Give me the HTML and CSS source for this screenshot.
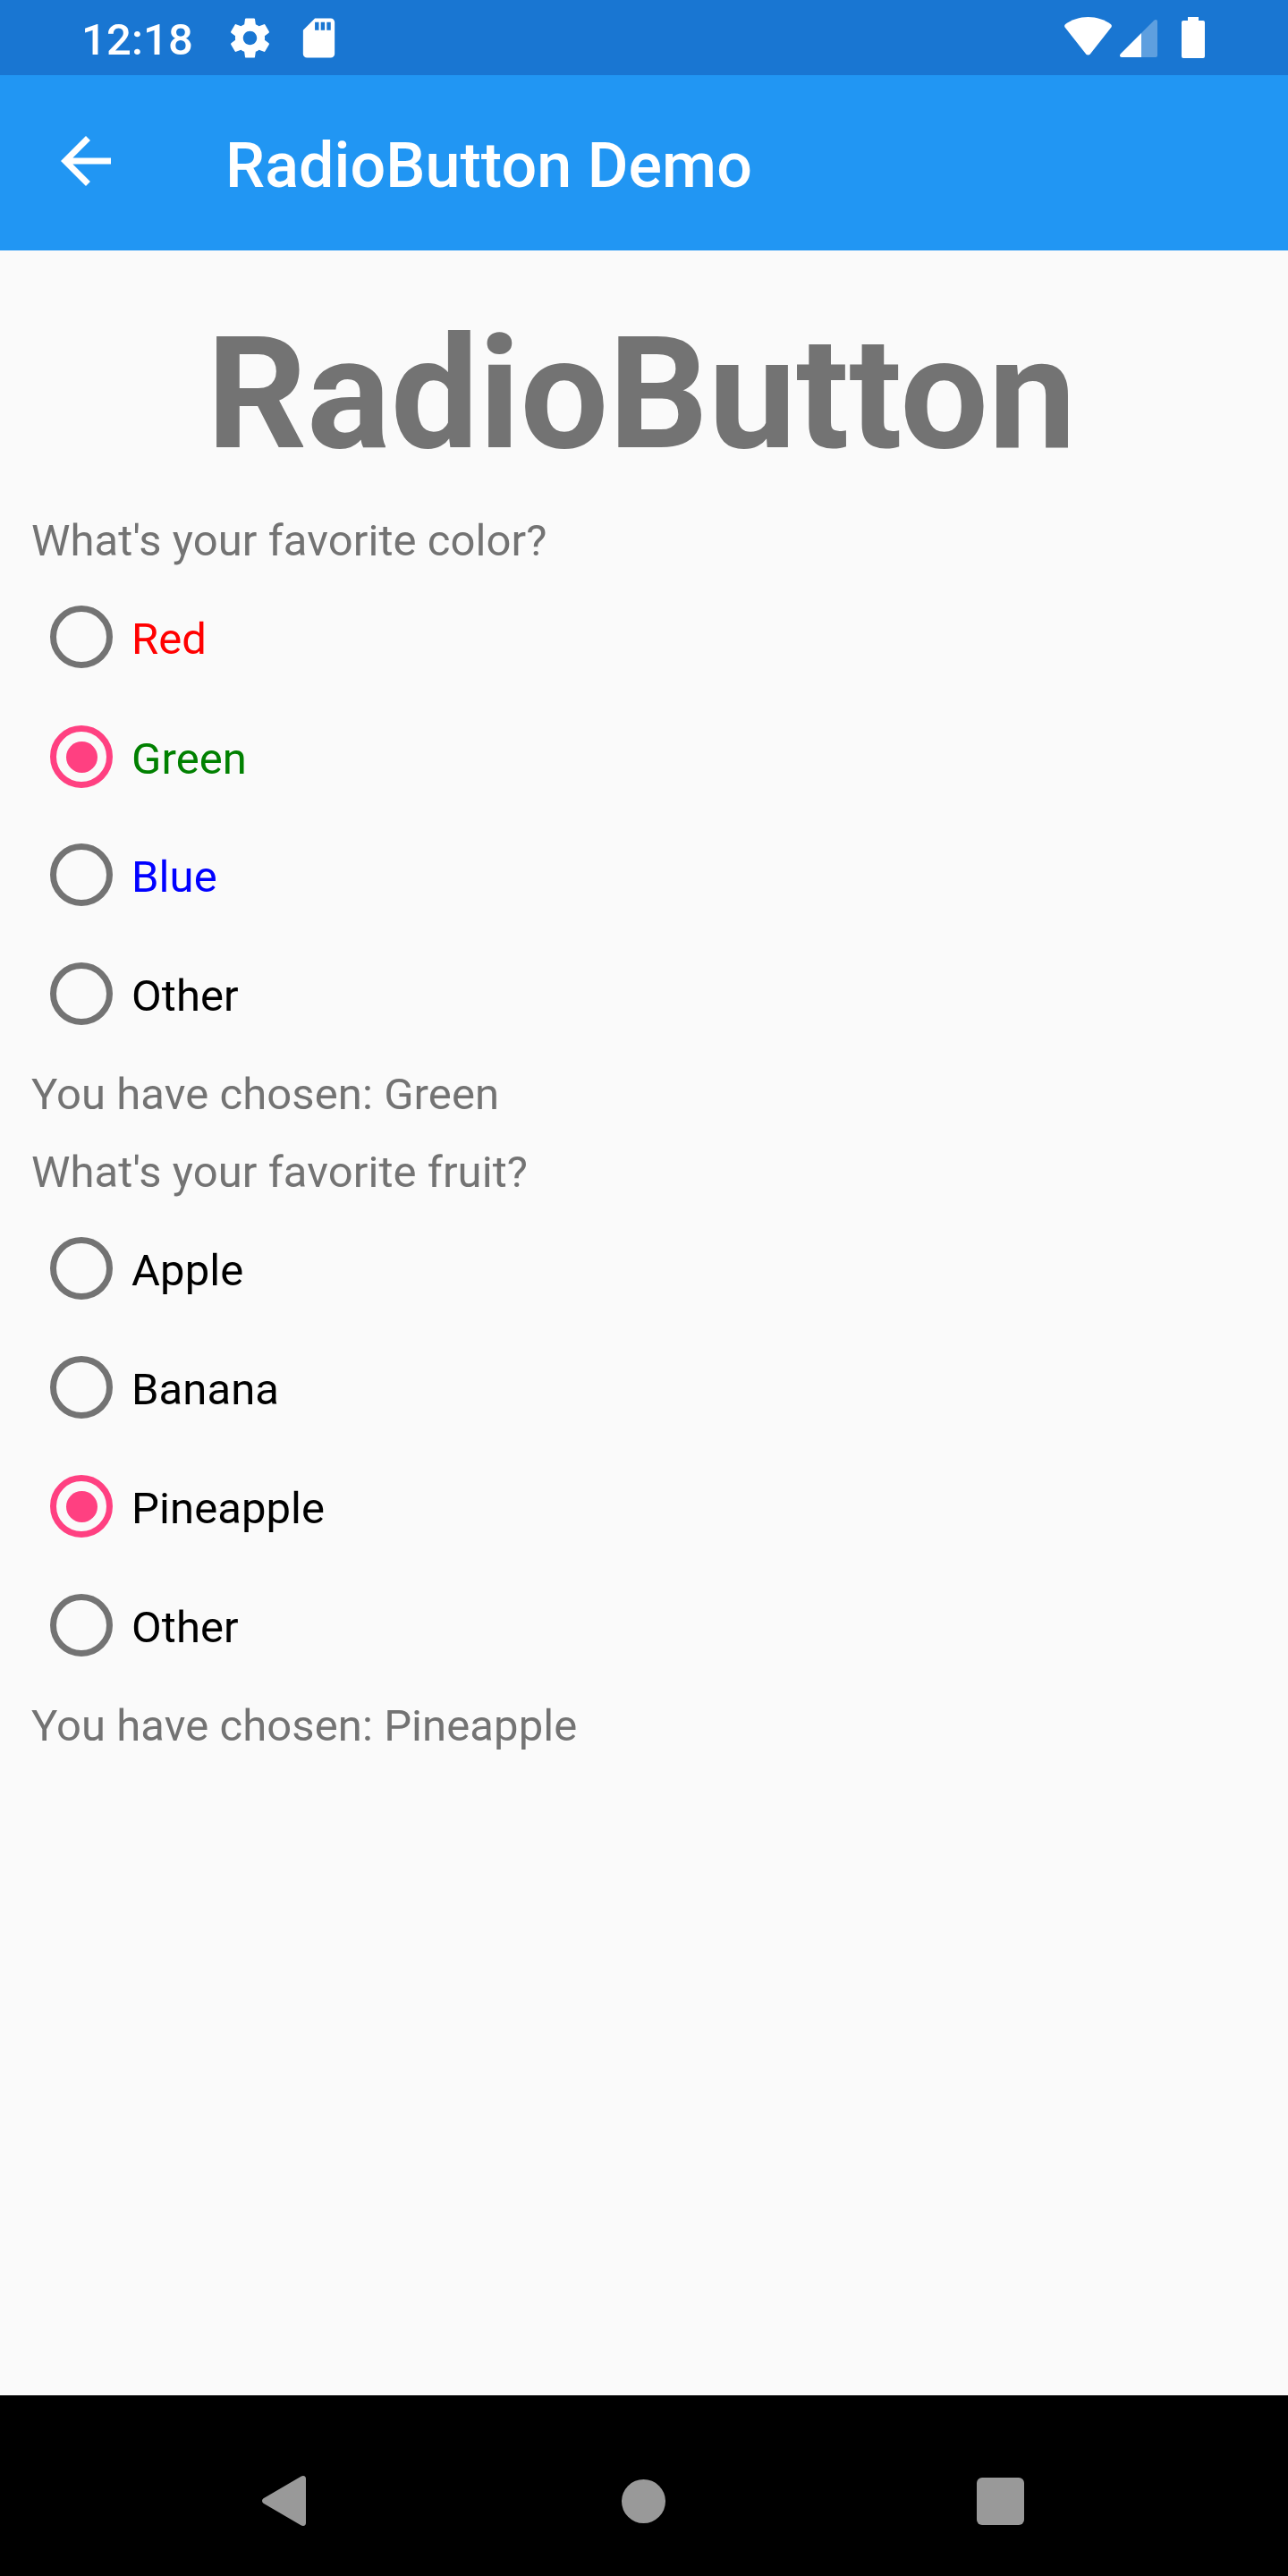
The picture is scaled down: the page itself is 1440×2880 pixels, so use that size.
FILE: index.html
```html
<!DOCTYPE html>
<html lang="en">
<head>
<meta charset="utf-8">
<title>RadioButton Demo</title>
<link rel="stylesheet" href="styles.css">
</head>
<body>
<div class="screen">
  <div class="status-bar">
    <span class="clock">12:18</span>
    <svg class="icon-settings" viewBox="0 0 24 24"><path d="M19.43 12.98c.04-.32.07-.64.07-.98s-.03-.66-.07-.98l2.11-1.65c.19-.15.24-.42.12-.64l-2-3.46c-.12-.22-.39-.3-.61-.22l-2.49 1c-.52-.4-1.08-.73-1.69-.98l-.38-2.65C14.46 2.18 14.25 2 14 2h-4c-.25 0-.46.18-.49.42l-.38 2.65c-.61.25-1.17.59-1.69.98l-2.49-1c-.23-.09-.49 0-.61.22l-2 3.46c-.13.22-.07.49.12.64l2.11 1.65c-.04.32-.07.65-.07.98s.03.66.07.98l-2.11 1.65c-.19.15-.24.42-.12.64l2 3.46c.12.22.39.3.61.22l2.49-1c.52.4 1.08.73 1.69.98l.38 2.65c.03.24.24.42.49.42h4c.25 0 .46-.18.49-.42l.38-2.65c.61-.25 1.17-.59 1.69-.98l2.49 1c.23.09.49 0 .61-.22l2-3.46c.12-.22.07-.49-.12-.64l-2.11-1.65zM12 15.5c-1.93 0-3.5-1.57-3.5-3.5s1.57-3.5 3.5-3.5 3.5 1.57 3.5 3.5-1.57 3.5-3.5 3.5z"/></svg>
    <svg class="icon-sd" viewBox="0 0 24 24"><path d="M18 2h-8L4.02 8 4 20c0 1.1.9 2 2 2h12c1.1 0 2-.9 2-2V4c0-1.1-.9-2-2-2zm-6 6h-2V4h2v4zm3 0h-2V4h2v4zm3 0h-2V4h2v4z"/></svg>
    <span class="spacer"></span>
    <svg class="icon-wifi" viewBox="0 0 53 43"><path d="M.6 11.600Q-.6 9.600 1.200 8.100C8 3 17 0 26.500 0S45 3 51.800 8.100Q53.600 9.600 52.400 11.600L29 41.200Q26.500 43.600 24 41.200Z"/></svg>
    <svg class="icon-signal" viewBox="0 0 42 42"><path class="dim" d="M24 15 37.800 1.200Q39 0 40.200 0Q42 0 42 2V40Q42 42 40 42H24Z"/><path d="M24 15V42H2Q0 42 0 40.200Q0 39 1 38Z"/></svg>
    <svg class="icon-battery" viewBox="0 0 26 46"><path d="M7 0H19V4H24Q26 4 26 6V44Q26 46 24 46H2Q0 46 0 44V6Q0 4 2 4H7Z"/></svg>
  </div>

  <header class="app-bar">
    <svg class="icon-back" viewBox="0 0 24 24"><path d="M20 11H7.830l5.590-5.590L12 4l-8 8 8 8 1.410-1.410L7.830 13H20v-2z"/></svg>
    <span class="app-title">RadioButton Demo</span>
  </header>

  <main class="content">
    <h1 class="heading">RadioButton</h1>

    <section class="group">
      <p class="caption">What's your favorite color?</p>
      <div class="options">
        <div class="option red"><span class="radio"></span><span class="label">Red</span></div>
        <div class="option green"><span class="radio checked"></span><span class="label">Green</span></div>
        <div class="option blue"><span class="radio"></span><span class="label">Blue</span></div>
        <div class="option"><span class="radio"></span><span class="label">Other</span></div>
      </div>
      <p class="caption">You have chosen: Green</p>
    </section>

    <section class="group">
      <p class="caption">What's your favorite fruit?</p>
      <div class="options">
        <div class="option"><span class="radio"></span><span class="label">Apple</span></div>
        <div class="option"><span class="radio"></span><span class="label">Banana</span></div>
        <div class="option"><span class="radio checked"></span><span class="label">Pineapple</span></div>
        <div class="option"><span class="radio"></span><span class="label">Other</span></div>
      </div>
      <p class="caption">You have chosen: Pineapple</p>
    </section>
  </main>

  <nav class="nav-bar">
    <svg class="nav-back" viewBox="0 0 49 56"><path d="M1.500 25.300 43 .9Q44.500 0 46 0Q49 .3 49 3.500V52.500Q49 55.700 46 56Q44.500 56 43 55.100L1.500 30.700Q0 29.800 0 28T1.500 25.300Z"/></svg>
    <span class="nav-home"></span>
    <span class="nav-recents"></span>
  </nav>
</div>
</body>
</html>
```

FILE: styles.css
```css
* {
  box-sizing: border-box;
}

body {
  margin: 0;
  font-family: Roboto, "Liberation Sans", sans-serif;
  background: #fafafa;
}

svg {
  display: block;
  flex: none;
  fill: #fff;
}

.screen {
  display: flex;
  flex-direction: column;
  width: 1440px;
  height: 2880px;
}

/* Status bar */
.status-bar {
  display: flex;
  align-items: flex-start;
  height: 84px;
  padding: 0 93px 0 91px;
  background: #1976d2;
  color: #fff;
}

.clock {
  width: 162px;
  padding-top: 16px;
  font-size: 49px;
  font-weight: 500;
  line-height: 57px;
  letter-spacing: 0.15px;
}

.icon-settings,
.icon-sd {
  width: 53px;
  height: 53px;
  margin-top: 16px;
}

.icon-sd {
  margin-left: 24px;
}

.spacer {
  flex: 1;
}

.icon-wifi {
  width: 53px;
  height: 43px;
  margin-top: 19px;
}

.icon-signal {
  width: 42px;
  height: 42px;
  margin: 22px 0 0 9px;
}

.icon-signal .dim {
  fill-opacity: 0.3;
}

.icon-battery {
  width: 26px;
  height: 46px;
  margin: 19px 0 0 27px;
}

/* App bar */
.app-bar {
  display: flex;
  align-items: flex-start;
  height: 196px;
  padding-left: 54px;
  background: #2196f3;
  color: #fff;
}

.icon-back {
  width: 84px;
  height: 84px;
  margin-top: 54px;
}

.app-title {
  margin: 60px 0 0 114px;
  font-size: 70px;
  font-weight: 500;
  line-height: 82px;
  letter-spacing: 0.08px;
}

/* Content */
.content {
  flex: 1;
  padding: 58px 35px 0;
}

.heading {
  margin: 0 0 33px;
  padding-right: 6px;
  font-size: 175px;
  font-weight: 700;
  line-height: 205px;
  text-align: center;
  color: #737373;
}

.group {
  margin-bottom: 30px;
}

.caption {
  margin: 0;
  font-size: 49px;
  line-height: 57px;
  letter-spacing: 0.08px;
  color: #737373;
}

.options {
  display: flex;
  flex-direction: column;
  gap: 21px;
  padding: 23px 0 28px 21px;
}

.option {
  display: flex;
  align-items: center;
  height: 112px;
  color: #000;
}

.option.red { color: #f00; }
.option.green { color: #008000; margin: 1px 0 -1px; }
.option.blue { color: #00f; }

.radio {
  display: flex;
  align-items: center;
  justify-content: center;
  width: 70px;
  height: 70px;
  border: 7px solid #737373;
  border-radius: 50%;
}

.radio.checked {
  border-color: #ff4081;
}

.radio.checked::before {
  content: "";
  width: 35px;
  height: 35px;
  border-radius: 50%;
  background: #ff4081;
}

.label {
  padding: 5px 0 0 21px;
  font-size: 49px;
  line-height: 57px;
  letter-spacing: 0.08px;
}

/* Navigation bar */
.nav-bar {
  display: flex;
  align-items: center;
  height: 202px;
  padding: 34px 0 0 293px;
  background: #000;
}

.nav-back {
  width: 49px;
  height: 56px;
  fill: #999;
}

.nav-home {
  width: 49px;
  height: 49px;
  margin-left: 353px;
  border-radius: 50%;
  background: #999;
}

.nav-recents {
  width: 53px;
  height: 53px;
  margin-left: 347.500px;
  border-radius: 6px;
  background: #999;
}
```
